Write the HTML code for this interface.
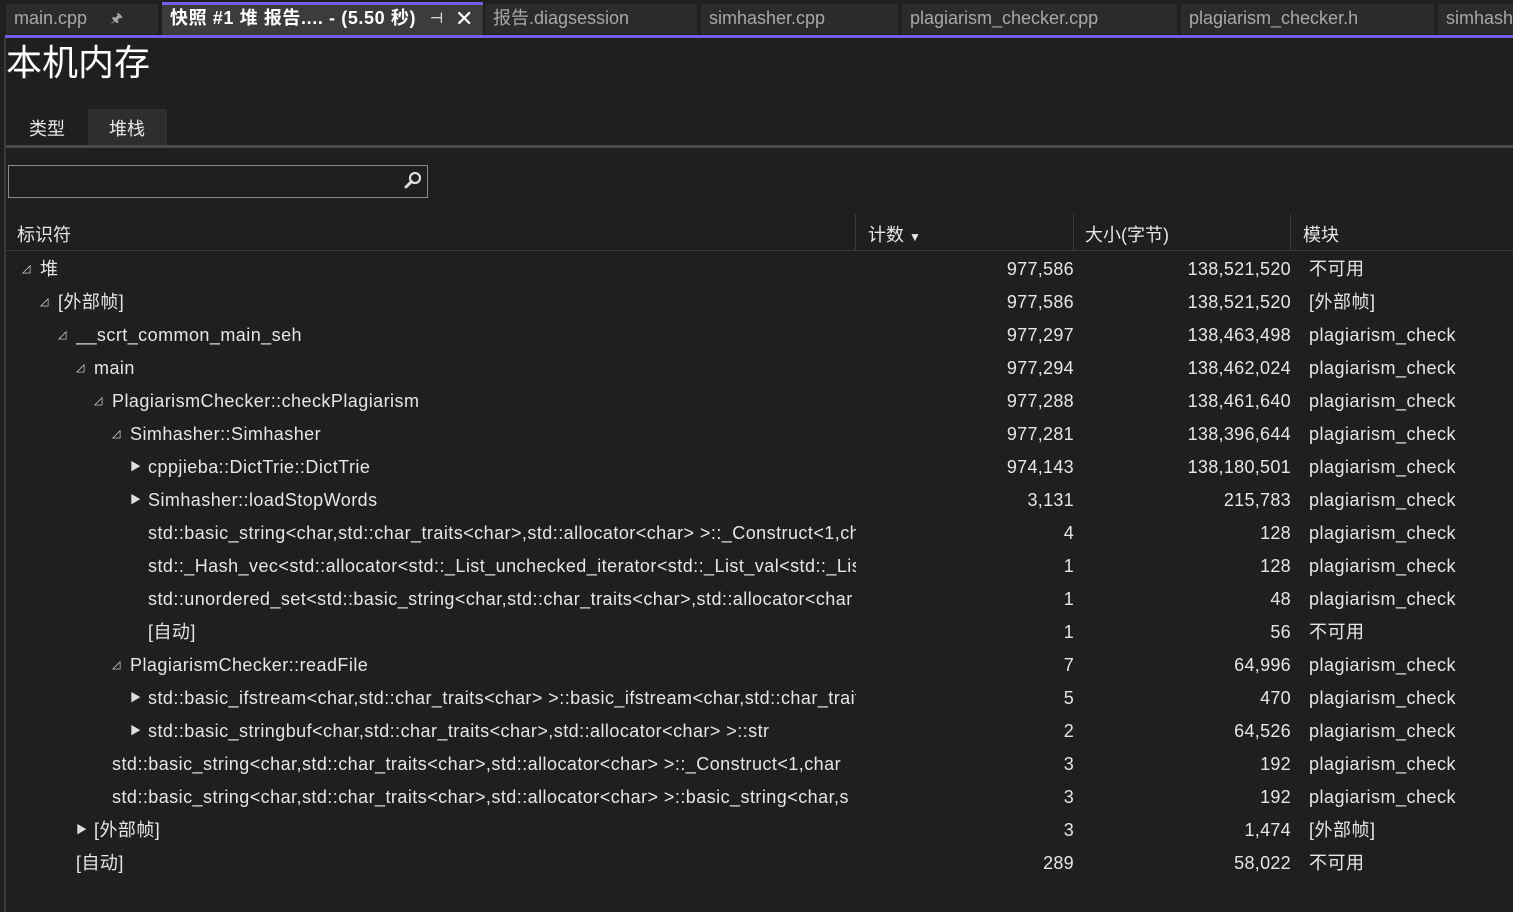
<!DOCTYPE html><html><head><style>
body{margin:0;width:1513px;height:912px;background:#1f1f1f;color:#e6e6e6;font-family:"Liberation Sans","Noto Sans CJK SC",sans-serif;font-size:18px;overflow:hidden;position:relative}
.a{position:absolute;white-space:nowrap}
.tab{position:absolute;top:4px;height:30px;background:#2b2b2b;color:#a8a8a8;font-size:18px;line-height:28px;padding-left:8px;box-sizing:border-box;overflow:hidden;white-space:nowrap}
.row{position:absolute;left:0;width:1513px;height:33px;line-height:33px}
.row span{position:absolute;white-space:nowrap}
.id{overflow:hidden;letter-spacing:0.45px}
.n{text-align:right;letter-spacing:0.3px}
.tri{font-size:11px;color:#ddd}
</style></head><body>
<div class="a" style="left:0;top:0;width:1513px;height:35px;background:#1f1f1f"></div>
<div class="tab" style="left:6px;width:152px">main.cpp<span style="position:absolute;left:104px;font-size:14px">&#x1F588;</span></div>
<div class="tab" style="left:162px;width:321px;top:2px;height:33px;background:#3c3c3c;color:#fff;font-weight:bold;border-top:3px solid #7160e8;line-height:27px;letter-spacing:0.6px">快照 #1 堆 报告.... - (5.50 秒)<span style="position:absolute;left:268px;font-weight:normal;font-size:15px">⊣</span><span style="position:absolute;left:293px;font-weight:normal;font-size:22px">✕</span></div>
<div class="tab" style="left:485px;width:212px">报告.diagsession</div>
<div class="tab" style="left:701px;width:197px">simhasher.cpp</div>
<div class="tab" style="left:902px;width:275px">plagiarism_checker.cpp</div>
<div class="tab" style="left:1181px;width:253px">plagiarism_checker.h</div>
<div class="tab" style="left:1438px;width:80px">simhasher.h</div>
<div class="a" style="left:5px;top:35px;width:1508px;height:3px;background:#7160e8"></div>
<div class="a" style="left:4px;top:38px;width:2px;height:874px;background:#3a3a3a"></div>
<div class="a" style="left:6px;top:40px;font-size:36px;color:#fff;line-height:46px">本机内存</div>
<div class="a" style="left:88px;top:109px;width:79px;height:36px;background:#2e2e2e"></div>
<div class="a" style="left:29px;top:115px">类型</div>
<div class="a" style="left:109px;top:115px">堆栈</div>
<div class="a" style="left:6px;top:145px;width:1507px;height:3px;background:#4a4a4a"></div>
<div class="a" style="left:8px;top:165px;width:418px;height:31px;border:1px solid #8a8a8a;background:#1f1f1f"></div>
<svg class="a" style="left:402px;top:170px" width="22" height="22" viewBox="0 0 22 22"><circle cx="13" cy="8" r="5" fill="none" stroke="#ddd" stroke-width="2.2"/><path d="M9.5 11.5L4 17" stroke="#ddd" stroke-width="3" stroke-linecap="round"/></svg>
<div class="a" style="left:17px;top:221px">标识符</div>
<div class="a" style="left:855px;top:214px;width:1px;height:36px;background:#3a3a3a"></div>
<div class="a" style="left:868px;top:221px">计数 <span style="font-size:12px">▼</span></div>
<div class="a" style="left:1073px;top:214px;width:1px;height:36px;background:#3a3a3a"></div>
<div class="a" style="left:1085px;top:221px">大小(字节)</div>
<div class="a" style="left:1290px;top:214px;width:1px;height:36px;background:#3a3a3a"></div>
<div class="a" style="left:1303px;top:221px">模块</div>
<div class="a" style="left:6px;top:250px;width:1507px;height:1px;background:#3a3a3a"></div>
<div id="rows"></div>
<script>
var d=[[0,1,"堆","977,586","138,521,520","不可用"],[1,1,"[外部帧]","977,586","138,521,520","[外部帧]"],[2,1,"__scrt_common_main_seh","977,297","138,463,498","plagiarism_check"],[3,1,"main","977,294","138,462,024","plagiarism_check"],[4,1,"PlagiarismChecker::checkPlagiarism","977,288","138,461,640","plagiarism_check"],[5,1,"Simhasher::Simhasher","977,281","138,396,644","plagiarism_check"],[6,2,"cppjieba::DictTrie::DictTrie","974,143","138,180,501","plagiarism_check"],[6,2,"Simhasher::loadStopWords","3,131","215,783","plagiarism_check"],[6,0,"std::basic_string&lt;char,std::char_traits&lt;char&gt;,std::allocator&lt;char&gt; &gt;::_Construct&lt;1,char","4","128","plagiarism_check"],[6,0,"std::_Hash_vec&lt;std::allocator&lt;std::_List_unchecked_iterator&lt;std::_List_val&lt;std::_List_","1","128","plagiarism_check"],[6,0,"std::unordered_set&lt;std::basic_string&lt;char,std::char_traits&lt;char&gt;,std::allocator&lt;char","1","48","plagiarism_check"],[6,0,"[自动]","1","56","不可用"],[5,1,"PlagiarismChecker::readFile","7","64,996","plagiarism_check"],[6,2,"std::basic_ifstream&lt;char,std::char_traits&lt;char&gt; &gt;::basic_ifstream&lt;char,std::char_traits","5","470","plagiarism_check"],[6,2,"std::basic_stringbuf&lt;char,std::char_traits&lt;char&gt;,std::allocator&lt;char&gt; &gt;::str","2","64,526","plagiarism_check"],[4,0,"std::basic_string&lt;char,std::char_traits&lt;char&gt;,std::allocator&lt;char&gt; &gt;::_Construct&lt;1,char","3","192","plagiarism_check"],[4,0,"std::basic_string&lt;char,std::char_traits&lt;char&gt;,std::allocator&lt;char&gt; &gt;::basic_string&lt;char,s","3","192","plagiarism_check"],[3,2,"[外部帧]","3","1,474","[外部帧]"],[2,0,"[自动]","289","58,022","不可用"]];
var h="";d.forEach(function(r,i){var x=40+18*r[0];var t=r[1]==1?"◿":r[1]==2?"▶":"";
h+='<div class="row" style="top:'+(253+33*i)+'px">'+(t?'<span class="tri" style="left:'+(x-18)+'px;top:0px">'+t+'</span>':'')+'<span class="id" style="left:'+x+'px;width:'+(856-x)+'px">'+r[2]+'</span><span class="n" style="right:439px">'+r[3]+'</span><span class="n" style="right:222px">'+r[4]+'</span><span style="left:1309px;letter-spacing:0.5px">'+r[5]+'</span></div>';});
document.getElementById("rows").innerHTML=h;
</script>
</body></html>
